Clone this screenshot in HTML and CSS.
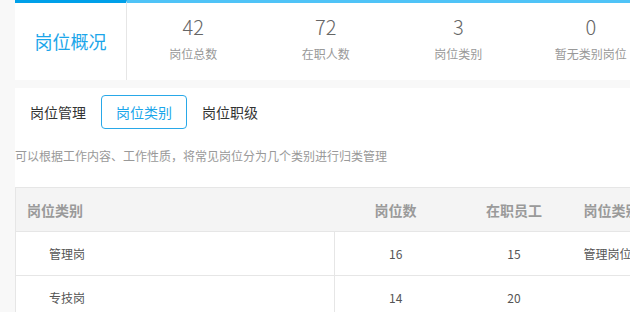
FILE: index.html
```html
<!DOCTYPE html>
<html lang="zh">
<head>
<meta charset="utf-8">
<link rel="stylesheet" href="styles.css">
</head>
<body>
<div class="page">
  <section class="overview">
    <div class="ov-title">岗位概况</div>
    <div class="ov-stats">
      <div class="stat"><div class="num">42</div><div class="lbl">岗位总数</div></div>
      <div class="stat"><div class="num">72</div><div class="lbl">在职人数</div></div>
      <div class="stat"><div class="num">3</div><div class="lbl">岗位类别</div></div>
      <div class="stat"><div class="num">0</div><div class="lbl">暂无类别岗位</div></div>
      <div class="stat"><div class="num">0</div><div class="lbl">暂无职级岗位</div></div>
    </div>
  </section>
  <section class="main">
    <div class="tabs">
      <div class="tab">岗位管理</div>
      <div class="tab active">岗位类别</div>
      <div class="tab">岗位职级</div>
    </div>
    <p class="desc">可以根据工作内容、工作性质，将常见岗位分为几个类别进行归类管理</p>
    <table class="grid">
      <thead>
        <tr>
          <th class="c1">岗位类别</th>
          <th class="c2">岗位数</th>
          <th class="c3">在职员工</th>
          <th class="c4">岗位类别说明</th>
        </tr>
      </thead>
      <tbody>
        <tr>
          <td class="c1">管理岗</td>
          <td class="c2">16</td>
          <td class="c3">15</td>
          <td class="c4">管理岗位类别说明</td>
        </tr>
        <tr>
          <td class="c1">专技岗</td>
          <td class="c2">14</td>
          <td class="c3">20</td>
          <td class="c4"></td>
        </tr>
      </tbody>
    </table>
  </section>
</div>
</body>
</html>
```

FILE: styles.css
```css
html, body {
  margin: 0;
  padding: 0;
  background: #f8f8f8;
  overflow: hidden;
  width: 630px;
  height: 312px;
}
body {
  font-family: "Noto Sans CJK SC", "Noto Sans", sans-serif;
  color: #333;
}
.page {
  padding-left: 15px;
  width: 900px;
}
.overview {
  display: flex;
  background: #fff;
  height: 80px;
  box-sizing: border-box;
}
.ov-title {
  width: 112px;
  flex: none;
  border-top: 3px solid #00a0e9;
  border-right: 1px solid #e6e6e6;
  display: flex;
  align-items: center;
  justify-content: center;
  font-size: 18px;
  color: #1ba6ea;
  padding-bottom: 2px;
  box-sizing: border-box;
}
.ov-stats {
  flex: 1;
  display: flex;
  border-top: 3px solid #4fc3f7;
}
.stat {
  width: 132.5px;
  flex: none;
  text-align: center;
  padding-top: 12px;
}
.num {
  font-size: 20px;
  line-height: 24px;
  color: #666;
  font-weight: 300;
}
.lbl {
  margin-top: 7px;
  font-size: 12px;
  line-height: 16px;
  color: #999;
}
.main {
  margin-top: 8px;
  background: #fff;
  padding-top: 7px;
  height: 400px;
}
.tabs {
  display: flex;
}
.tab {
  height: 34px;
  line-height: 32px;
  padding: 0 14px;
  font-size: 14px;
  color: #333;
  box-sizing: border-box;
  border: 1px solid transparent;
  border-radius: 4px;
}
.tab.active {
  border-color: #29a8e8;
  color: #1ba6ea;
}
.desc {
  margin: 18px 0 0;
  font-size: 12px;
  line-height: 18px;
  color: #999;
}
.grid {
  margin-top: 22px;
  border-collapse: collapse;
  border: 1px solid #e6e6e6;
  width: 860px;
  table-layout: fixed;
}
.grid th, .grid td {
  height: 44px;
  padding: 0;
  box-sizing: border-box;
  border-bottom: 1px solid #e6e6e6;
}
.grid th {
  background: #f4f4f4;
  color: #9a9a9a;
  font-size: 14px;
  font-weight: bold;
  height: 44px;
}
.grid td {
  font-size: 12px;
  color: #555;
}
.grid .c1 { width: 319px; text-align: left; }
.grid .c2 { width: 122px; text-align: center; }
.grid .c3 { width: 115px; text-align: center; }
.grid .c4 { text-align: left; padding-left: 12px; }
.grid th.c1 { padding-left: 11px; }
.grid td.c1 { padding-left: 33px; border-right: 1px solid #e6e6e6; }
```
